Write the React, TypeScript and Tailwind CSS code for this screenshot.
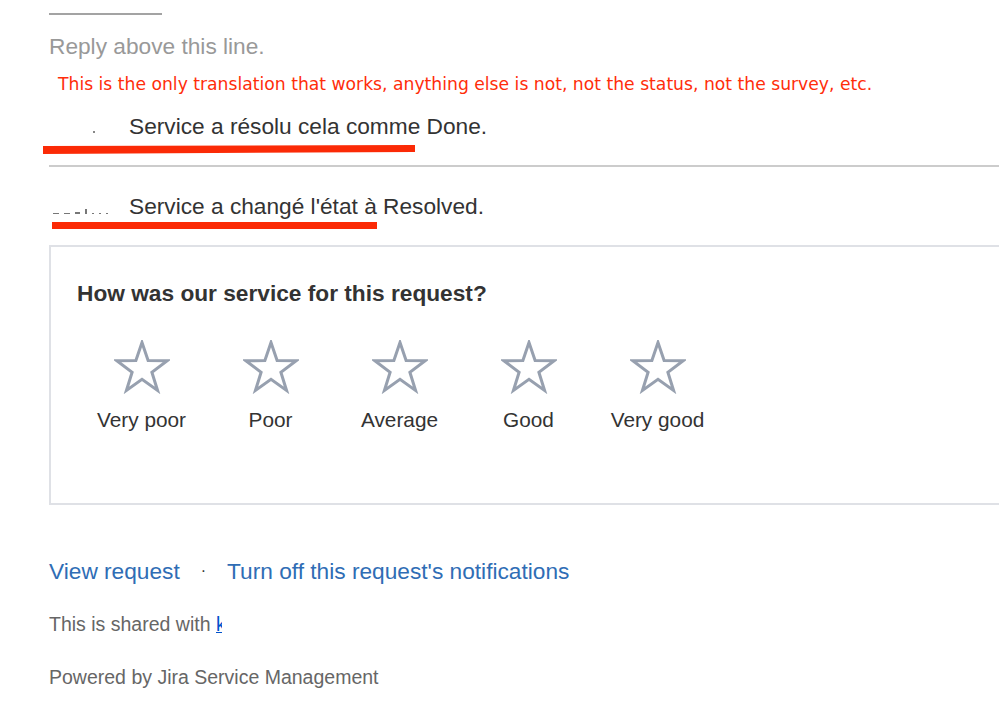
import React from "react";

const labels = ["Very poor", "Poor", "Average", "Good", "Very good"];

function Star() {
  const cx = 28;
  const cy = 29;
  const R = 26.5;
  const r = 10.4;
  const pts: string[] = [];
  for (let i = 0; i < 10; i++) {
    const ang = (-90 + i * 36) * (Math.PI / 180);
    const rad = i % 2 === 0 ? R : r;
    pts.push(`${(cx + rad * Math.cos(ang)).toFixed(2)},${(cy + rad * Math.sin(ang)).toFixed(2)}`);
  }
  return (
    <svg width="56" height="54" viewBox="0 0 56 54" className="block">
      <polygon points={pts.join(" ")} fill="none" stroke="#97a0af" strokeWidth="3" strokeLinejoin="miter" />
    </svg>
  );
}

export default function App() {
  return (
    <div className="relative w-full h-[728px] overflow-hidden bg-white pl-[49px] font-['Liberation_Sans',Arial,sans-serif]">
      {/* annotation underlines */}
      <svg className="absolute left-0 top-0 pointer-events-none" width="999" height="728">
        <polygon points="43,146 415,145 415,152 43,154" fill="#fb2a06" />
        <polygon points="52,222 377,222 377,229 52,229" fill="#fb2a06" />
      </svg>

      <div className="pt-[13px]">
        <div className="h-[2px] w-[113px] bg-[#a3a3a3]" />
      </div>

      <div className="mt-[16px] text-[22.7px] leading-[30px] text-[#999999]">Reply above this line.</div>

      <div className="mt-[11px] pl-[9px] text-[17.2px] leading-[24px] text-[#ff2d0a] font-['DejaVu_Sans',Verdana,sans-serif]">
        This is the only translation that works, anything else is not, not the status, not the survey, etc.
      </div>

      <div className="mt-[15px] flex items-center text-[22.7px] leading-[30px] text-[#333333]">
        <div className="w-[80px] h-[30px] relative">
          <div className="absolute left-[44px] top-[20px] w-[2px] h-[2px] bg-[#888]" />
        </div>
        <span>Service a résolu cela comme Done.</span>
      </div>

      <div className="mt-[24px] h-[2px] w-[1000px] bg-[#cccccc]" />

      <div className="mt-[24px] flex items-center text-[22.7px] leading-[30px] text-[#333333]">
        <div className="w-[80px] h-[30px] flex items-end gap-[5px] pb-[7px] pl-[4px]">
          <div className="w-[6px] h-[1px] bg-[#777]" />
          <div className="w-[6px] h-[1px] bg-[#777]" />
          <div className="w-[5px] h-[2px] bg-[#777]" />
          <div className="w-[2px] h-[5px] bg-[#777]" />
          <div className="w-[2px] h-[1px] bg-[#777]" />
          <div className="w-[2px] h-[1px] bg-[#777]" />
          <div className="w-[2px] h-[1px] bg-[#777]" />
        </div>
        <span>Service a changé l'état à Resolved.</span>
      </div>

      <div className="mt-[24px] w-[1000px] h-[260px] border-2 border-[#dfe1e6] pl-[26px] pt-[31px]">
        <div className="text-[22.7px] leading-[30px] font-bold text-[#333333]">How was our service for this request?</div>
        <div className="mt-[32px] flex">
          {labels.map((l) => (
            <div key={l} className="w-[129px] flex flex-col items-center">
              <Star />
              <div className="mt-[12px] text-[20.8px] leading-[28px] text-[#333333]">{l}</div>
            </div>
          ))}
        </div>
      </div>

      <div className="mt-[51px] flex items-center text-[22.7px] leading-[30px]">
        <span className="text-[#2f6db5]">View request</span>
        <span className="mx-[21px] text-[#333333] text-[16px]">·</span>
        <span className="text-[#2f6db5]">Turn off this request's notifications</span>
      </div>

      <div className="mt-[25px] flex items-center text-[19.5px] leading-[26px] text-[#666666]">
        <span>This is shared with&nbsp;</span>
        <span className="inline-block w-[6px] overflow-hidden text-[#0052cc] underline">k</span>
      </div>

      <div className="mt-[27px] text-[19.5px] leading-[26px] text-[#666666]">Powered by Jira Service Management</div>
    </div>
  );
}
